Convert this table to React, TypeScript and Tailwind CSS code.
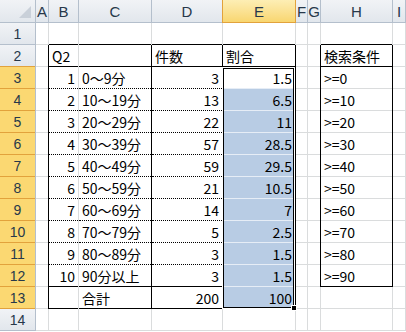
import React from 'react'

type Line = 'grid' | 'black' | 'dot' | 'hdr' | 'sel' | 'pale' | 'none'

interface Cell {
  text?: string
  align?: 'left' | 'right' | 'center'
  right: Line
  bottom: Line
  fill?: 'blue' | 'hdr' | 'hdrSel' | 'rowSel' | 'corner'
}

// column widths include the 1px right line
const COLS = 10

const rows: [number, string, number, string, string][] = [
  [1, '0～9分', 3, '1.5', '>=0'],
  [2, '10～19分', 13, '6.5', '>=10'],
  [3, '20～29分', 22, '11', '>=20'],
  [4, '30～39分', 57, '28.5', '>=30'],
  [5, '40～49分', 59, '29.5', '>=40'],
  [6, '50～59分', 21, '10.5', '>=50'],
  [7, '60～69分', 14, '7', '>=60'],
  [8, '70～79分', 5, '2.5', '>=70'],
  [9, '80～89分', 3, '1.5', '>=80'],
  [10, '90分以上', 3, '1.5', '>=90'],
]

function vLine(kind: Line) {
  switch (kind) {
    case 'black':
      return <div className="w-px shrink-0 bg-black" />
    case 'hdr':
      return <div className="w-px shrink-0 bg-[#b4bfcc]" />
    case 'sel':
      return <div className="w-px shrink-0 bg-[#e2a23c]" />
    case 'pale':
      return <div className="w-px shrink-0 bg-[#e6edf6]" />
    case 'none':
      return null
    default:
      return <div className="w-px shrink-0 bg-[#dadcdd]" />
  }
}

function hLine(kind: Line) {
  switch (kind) {
    case 'black':
      return <div className="h-px shrink-0 bg-black" />
    case 'dot':
      return <div className="h-0 shrink-0 border-t border-dotted border-black" />
    case 'hdr':
      return <div className="h-px shrink-0 bg-[#b4bfcc]" />
    case 'sel':
      return <div className="h-px shrink-0 bg-[#e2a23c]" />
    case 'pale':
      return <div className="h-px shrink-0 bg-[#e6edf6]" />
    case 'none':
      return null
    default:
      return <div className="h-px shrink-0 bg-[#dadcdd]" />
  }
}

function fillClass(fill?: Cell['fill']) {
  switch (fill) {
    case 'blue':
      return 'bg-[#b8cce4]'
    case 'hdr':
    case 'corner':
      return 'bg-gradient-to-b from-[#f1f3f6] to-[#e1e6ec] text-[#27384a]'
    case 'hdrSel':
      return 'bg-gradient-to-b from-[#fdeeb4] to-[#f8d56c] text-[#27384a]'
    case 'rowSel':
      return 'bg-[#fbd872] text-[#27384a]'
    default:
      return 'bg-white text-black'
  }
}

function buildSheet(): Cell[][] {
  const sheet: Cell[][] = []

  // column header row
  const letters = ['', 'A', 'B', 'C', 'D', 'E', 'F', 'G', 'H', 'I']
  sheet.push(
    letters.map((l, c) => ({
      text: l,
      align: 'center',
      right: c === 4 || c === 5 ? 'sel' : 'hdr',
      bottom: c === 5 ? 'sel' : 'hdr',
      fill: c === 0 ? 'corner' : c === 5 ? 'hdrSel' : 'hdr',
    }))
  )

  for (let r = 1; r <= 14; r++) {
    const line: Cell[] = []
    const selRow = r >= 3 && r <= 13
    const inTable = r >= 2 && r <= 13
    const inCond = r >= 2 && r <= 12
    for (let c = 0; c < COLS; c++) {
      const cell: Cell = { right: 'grid', bottom: 'grid' }
      if (c === 0) {
        cell.text = String(r)
        cell.align = 'center'
        cell.fill = selRow ? 'rowSel' : 'hdr'
        cell.right = 'hdr'
        cell.bottom = selRow ? 'sel' : 'hdr'
        if (r === 2) cell.bottom = 'sel'
        line.push(cell)
        continue
      }

      // right edges
      if (inTable && (c === 1 || c === 3 || c === 4 || c === 5)) cell.right = 'black'
      if (inCond && (c === 7 || c === 8)) cell.right = 'black'

      // bottom edges
      const tableCol = c >= 2 && c <= 5
      if (r === 1 && (tableCol || c === 8)) cell.bottom = 'black'
      if (r === 2 && (tableCol || c === 8)) cell.bottom = 'black'
      if (r >= 3 && r <= 11 && c >= 2 && c <= 4) cell.bottom = 'dot'
      if (r >= 3 && r <= 12 && c === 5) cell.bottom = 'pale'
      if ((r === 12 || r === 13) && c >= 2 && c <= 4) cell.bottom = 'black'
      if (r === 13 && c === 5) cell.bottom = 'black'
      if (r === 12 && c === 8) cell.bottom = 'black'

      if (c === 5 && r >= 4 && r <= 13) cell.fill = 'blue'

      if (r === 2) {
        if (c === 2) cell.text = 'Q2'
        if (c === 4) cell.text = '件数'
        if (c === 5) cell.text = '割合'
        if (c === 8) cell.text = '検索条件'
        cell.align = 'left'
      }
      if (r >= 3 && r <= 12) {
        const d = rows[r - 3]
        if (c === 2) { cell.text = String(d[0]); cell.align = 'right' }
        if (c === 3) { cell.text = d[1]; cell.align = 'left' }
        if (c === 4) { cell.text = String(d[2]); cell.align = 'right' }
        if (c === 5) { cell.text = d[3]; cell.align = 'right' }
        if (c === 8) { cell.text = d[4]; cell.align = 'left' }
      }
      if (r === 13) {
        if (c === 3) { cell.text = '合計'; cell.align = 'left' }
        if (c === 4) { cell.text = '200'; cell.align = 'right' }
        if (c === 5) { cell.text = '100'; cell.align = 'right' }
      }
      line.push(cell)
    }
    sheet.push(line)
  }
  return sheet
}

function CornerMark() {
  return (
    <svg width="14" height="14" viewBox="0 0 14 14" className="absolute right-[3px] bottom-[3px]">
      <polygon points="13,1 13,13 1,13" fill="#c9d0d9" />
    </svg>
  )
}

export default function App() {
  const sheet = buildSheet()

  return (
    <div className="w-[406px] h-[332px] overflow-hidden bg-white font-['Noto_Sans_CJK_JP','Liberation_Sans',sans-serif] text-[14px]">
      <div className="relative grid grid-cols-[36px_13px_30px_73px_71px_73px_12px_13px_72px_13px] grid-rows-[23px_repeat(14,22px)]">
        {sheet.map((line, r) =>
          line.map((cell, c) => (
            <div key={`${r}-${c}`} className={`flex min-w-0 ${fillClass(cell.fill)}`}>
              <div className="flex flex-1 flex-col min-w-0">
                <div
                  className={`relative flex flex-1 items-center overflow-visible whitespace-nowrap px-[3px] leading-none ${
                    cell.align === 'right' ? 'justify-end' : cell.align === 'center' ? 'justify-center' : 'justify-start'
                  }`}
                >
                  {cell.fill === 'corner' && <CornerMark />}
                  <span className={r === 0 ? "font-['Liberation_Sans',sans-serif] text-[15px]" : c === 0 ? "font-['Liberation_Sans',sans-serif] text-[14px]" : ''}>
                    {cell.text}
                  </span>
                </div>
                {hLine(cell.bottom)}
              </div>
              {vLine(cell.right)}
            </div>
          ))
        )}

        {/* selection outline around E3:E13 */}
        <div className="pointer-events-none absolute left-[222px] top-[67px] w-[73px] h-[242px] border border-white">
          <div className="h-full w-full border border-black" />
        </div>
        {/* fill handle */}
        <div className="absolute left-[291px] top-[305px] w-[6px] h-[6px] bg-black border border-white" />
      </div>
    </div>
  )
}
